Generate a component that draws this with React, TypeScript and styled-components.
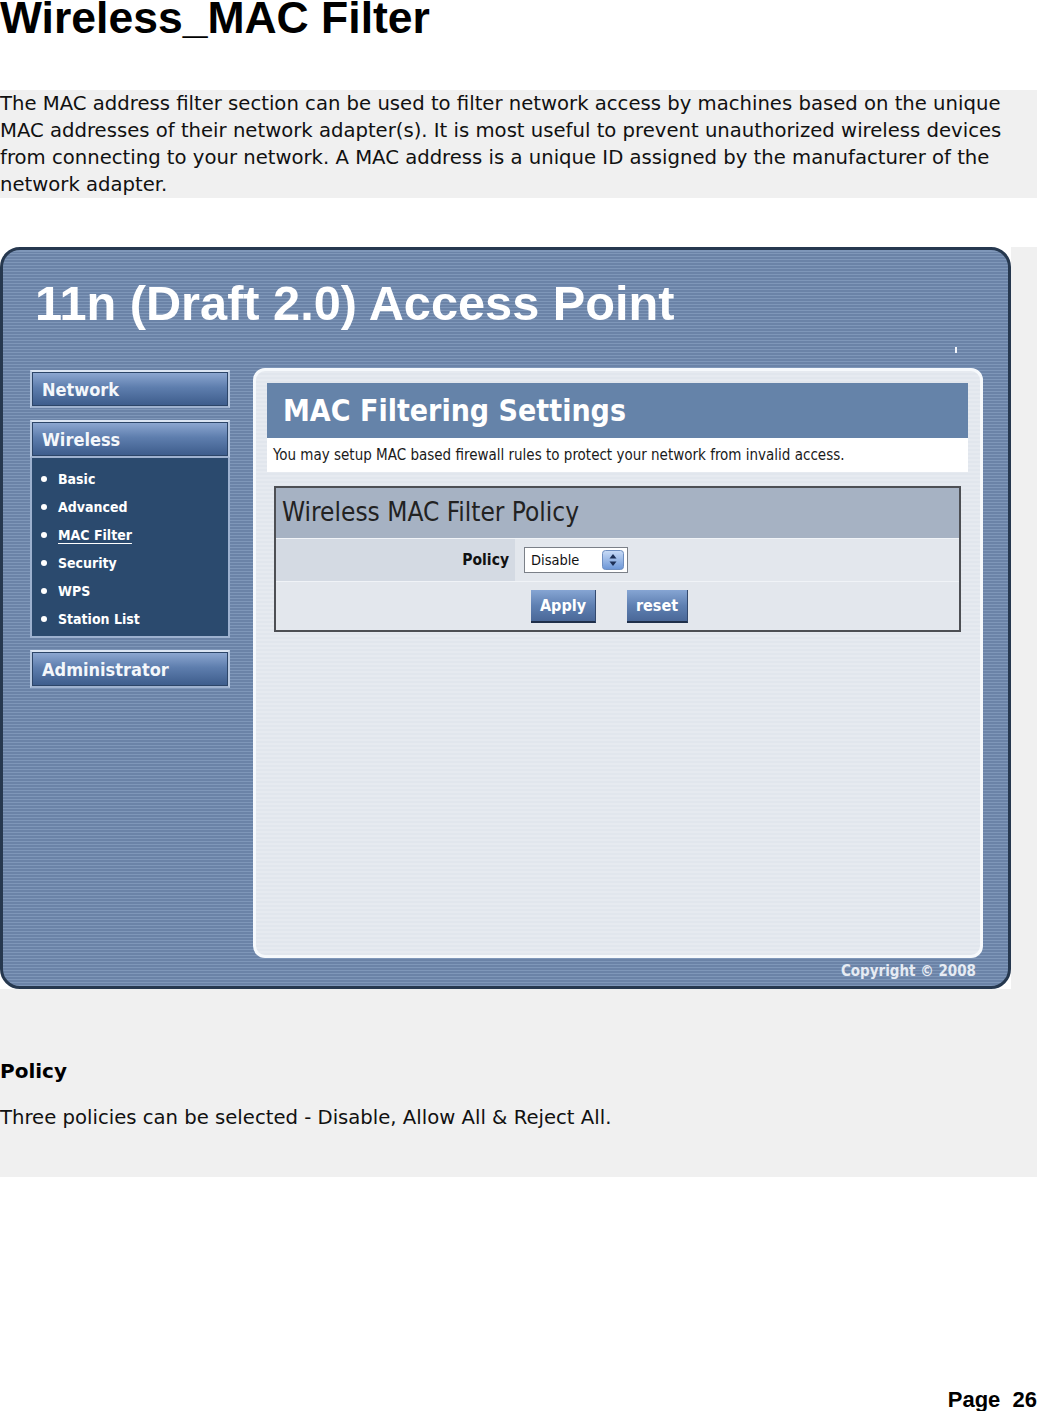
import React from "react";
import styled, { createGlobalStyle } from "styled-components";

const Global = createGlobalStyle`
  html, body { margin: 0; padding: 0; background: #ffffff; }
  body { font-family: "DejaVu Sans", sans-serif; color: #000; }
`;

const Page = styled.div`
  width: 1037px;
  display: flex;
  flex-direction: column;
`;

const Title = styled.h1`
  margin: 0;
  font-family: "Liberation Sans", Arial, sans-serif;
  font-weight: 700;
  font-size: 44.5px;
  line-height: 36px;
  height: 36px;
  color: #000;
`;

const Intro = styled.p`
  margin: 54px 0 0 0;
  background: #f0f0f0;
  font-family: "DejaVu Sans", sans-serif;
  font-size: 19.65px;
  line-height: 27px;
  color: #111;
`;

const Section = styled.section`
  margin-top: 49px;
  background: #f0f0f0;
  padding-bottom: 46px;
  display: flex;
  flex-direction: column;
`;

const Frame = styled.div`
  width: 1011px;
  height: 742px;
  background: #ffffff;
  display: flex;
`;

const Panel = styled.div`
  position: relative;
  flex: 1;
  border: 3px solid #26384f;
  border-radius: 20px;
  background: repeating-linear-gradient(
    to bottom,
    #7f97b9 0px,
    #7f97b9 1.5px,
    #6b83a7 1.5px,
    #6b83a7 3px
  );
  display: flex;
  flex-direction: column;
  overflow: hidden;
`;

const Banner = styled.div`
  height: 122px;
  padding-left: 32px;
  box-sizing: border-box;
  padding-top: 28px;
  font-family: "Liberation Sans", Arial, sans-serif;
  font-weight: 700;
  font-size: 48.7px;
  line-height: 50px;
  color: #ffffff;
`;

const Tick = styled.span`
  position: absolute;
  left: 952px;
  top: 97px;
  width: 2px;
  height: 6px;
  background: #f2f5fa;
`;

const Body = styled.div`
  display: flex;
  align-items: flex-start;
  padding-left: 27px;
  gap: 23px;
`;

const Sidebar = styled.nav`
  width: 200px;
  display: flex;
  flex-direction: column;
  padding-top: 2px;
`;

const NavButton = styled.div<{ $gapAfter?: boolean }>`
  height: 38px;
  box-sizing: border-box;
  border: 2px solid #b9c9e0;
  border-top-color: #dbe5f3;
  border-bottom-color: #9fb2cf;
  background: linear-gradient(to bottom, #8fa9d2 0%, #5e7eae 45%, #3c5b8a 100%);
  box-shadow: inset 0 0 0 1px #2c4568;
  display: flex;
  align-items: center;
  padding-left: 10px;
  font-family: "DejaVu Sans Condensed", "DejaVu Sans", sans-serif;
  font-weight: 700;
  font-size: 18px;
  color: #f4f7fb;
  margin-bottom: ${(p) => (p.$gapAfter ? "12px" : "0")};
`;

const SubMenu = styled.ul`
  margin: 0 0 12px 0;
  padding: 7px 0 3px 0;
  list-style: none;
  background: #2b4a6e;
  border: 2px solid #9db1cf;
  border-top: none;
  display: flex;
  flex-direction: column;
`;

const SubItem = styled.li<{ $active?: boolean }>`
  height: 28px;
  flex: none;
  display: flex;
  align-items: center;
  padding-left: 9px;
  font-family: "DejaVu Sans Condensed", "DejaVu Sans", sans-serif;
  font-weight: 700;
  font-size: 14px;
  color: #ffffff;
  text-decoration: ${(p) => (p.$active ? "underline" : "none")};
  text-underline-offset: 3px;

  &::before {
    content: "";
    width: 6px;
    height: 6px;
    border-radius: 50%;
    background: #ffffff;
    margin-right: 11px;
    flex: none;
  }
`;

const Main = styled.div`
  width: 730px;
  height: 590px;
  box-sizing: border-box;
  border: 3px solid #f6f9fc;
  border-radius: 12px;
  background: repeating-linear-gradient(
    to bottom,
    #e6eaf0 0px,
    #e6eaf0 2px,
    #e1e6ed 2px,
    #e1e6ed 4px
  );
  padding: 12px 12px 0 11px;
  display: flex;
  flex-direction: column;
`;

const Header = styled.div`
  height: 55px;
  background: #6583a9;
  display: flex;
  align-items: center;
  padding-left: 16px;
  font-family: "DejaVu Sans Condensed", "DejaVu Sans", sans-serif;
  font-weight: 700;
  font-size: 30px;
  color: #ffffff;
`;

const Desc = styled.div`
  height: 34px;
  background: #ffffff;
  display: flex;
  align-items: center;
  padding-left: 6px;
  font-family: "DejaVu Sans Condensed", "DejaVu Sans", sans-serif;
  font-size: 15px;
  color: #1a1a1a;
`;

const Table = styled.div`
  margin: 14px 7px 0 7px;
  border: 2px solid #4d4f54;
  display: flex;
  flex-direction: column;
`;

const TableHead = styled.div`
  height: 50px;
  background: #a6b2c3;
  display: flex;
  align-items: center;
  padding-left: 6px;
  padding-bottom: 3px;
  box-sizing: border-box;
  font-family: "DejaVu Sans Condensed", "DejaVu Sans", sans-serif;
  font-size: 26px;
  color: #222;
`;

const Row = styled.div`
  display: flex;
  height: 42px;
  border-top: 1px solid #f0f3f7;
`;

const LabelCell = styled.div`
  width: 239px;
  background: #d4dae3;
  display: flex;
  align-items: center;
  justify-content: flex-end;
  padding-right: 6px;
  box-sizing: border-box;
  font-family: "DejaVu Sans Condensed", "DejaVu Sans", sans-serif;
  font-weight: 700;
  font-size: 15.5px;
  color: #111;
`;

const ValueCell = styled.div`
  flex: 1;
  background: #e3e7ed;
  display: flex;
  align-items: center;
  padding-left: 9px;
`;

const Select = styled.div`
  width: 104px;
  height: 26px;
  box-sizing: border-box;
  border: 1px solid #7b8088;
  background: #ffffff;
  display: flex;
  align-items: center;
  justify-content: space-between;
  padding: 0 3px 0 6px;
  font-family: "DejaVu Sans Condensed", "DejaVu Sans", sans-serif;
  font-size: 14.5px;
  color: #111;
`;

const ButtonRow = styled.div`
  height: 48px;
  background: #e3e7ed;
  border-top: 1px solid #f0f3f7;
  display: flex;
  align-items: center;
  padding-left: 255px;
  gap: 31px;
`;

const Btn = styled.div<{ $w: number }>`
  width: ${(p) => p.$w}px;
  height: 33px;
  box-sizing: border-box;
  background: linear-gradient(to bottom, #86a5d3 0%, #5f80b2 50%, #4a6898 100%);
  border-bottom: 2px solid #1f2f4a;
  border-right: 1px solid #33496e;
  display: flex;
  align-items: center;
  justify-content: center;
  font-family: "DejaVu Sans Condensed", "DejaVu Sans", sans-serif;
  font-weight: 700;
  font-size: 16px;
  color: #ffffff;
`;

const Footer = styled.div`
  margin-top: auto;
  height: 26px;
  padding-top: 3px;
  display: flex;
  align-items: flex-start;
  justify-content: flex-end;
  padding-right: 32px;
  font-family: "DejaVu Sans Condensed", "DejaVu Sans", sans-serif;
  font-weight: 700;
  font-size: 15px;
  line-height: 20px;
  color: #e6ebf3;
`;

const Heading = styled.h3`
  margin: 69px 0 0 0;
  font-family: "DejaVu Sans", sans-serif;
  font-weight: 700;
  font-size: 20px;
  line-height: 27px;
`;

const Text = styled.p`
  margin: 19px 0 0 0;
  font-family: "DejaVu Sans", sans-serif;
  font-size: 19.65px;
  line-height: 27px;
  color: #111;
`;

const PageNo = styled.div`
  margin-top: 212px;
  text-align: right;
  white-space: pre;
  font-family: "Liberation Sans", Arial, sans-serif;
  font-weight: 700;
  font-size: 22px;
  line-height: 22px;
`;

const SpinIcon = () => (
  <svg width="22" height="20" viewBox="0 0 22 20">
    <defs>
      <linearGradient id="sg" x1="0" y1="0" x2="0" y2="1">
        <stop offset="0" stopColor="#c9dcf7" />
        <stop offset="1" stopColor="#6b95d6" />
      </linearGradient>
    </defs>
    <rect x="0.5" y="0.5" width="21" height="19" rx="3" fill="url(#sg)" stroke="#6f8fc0" />
    <path d="M11 4 L14.5 8.5 H7.5 Z" fill="#1d2f55" />
    <path d="M11 16 L14.5 11.5 H7.5 Z" fill="#1d2f55" />
  </svg>
);

export default function App() {
  const items = ["Basic", "Advanced", "MAC Filter", "Security", "WPS", "Station List"];
  return (
    <>
      <Global />
      <Page>
        <Title>Wireless_MAC Filter</Title>
        <Intro>
          The MAC address filter section can be used to filter network access by machines based on the unique
          <br />
          MAC addresses of their network adapter(s). It is most useful to prevent unauthorized wireless devices
          <br />
          from connecting to your network. A MAC address is a unique ID assigned by the manufacturer of the
          <br />
          network adapter.
        </Intro>
        <Section>
          <Frame>
            <Panel>
              <Banner>11n (Draft 2.0) Access Point</Banner>
              <Tick />
              <Body>
                <Sidebar>
                  <NavButton $gapAfter>Network</NavButton>
                  <NavButton>Wireless</NavButton>
                  <SubMenu>
                    {items.map((it) => (
                      <SubItem key={it} $active={it === "MAC Filter"}>
                        {it}
                      </SubItem>
                    ))}
                  </SubMenu>
                  <NavButton>Administrator</NavButton>
                </Sidebar>
                <Main>
                  <Header>MAC Filtering Settings</Header>
                  <Desc>You may setup MAC based firewall rules to protect your network from invalid access.</Desc>
                  <Table>
                    <TableHead>Wireless MAC Filter Policy</TableHead>
                    <Row>
                      <LabelCell>Policy</LabelCell>
                      <ValueCell>
                        <Select>
                          <span>Disable</span>
                          <SpinIcon />
                        </Select>
                      </ValueCell>
                    </Row>
                    <ButtonRow>
                      <Btn $w={65}>Apply</Btn>
                      <Btn $w={61}>reset</Btn>
                    </ButtonRow>
                  </Table>
                </Main>
              </Body>
              <Footer>Copyright © 2008</Footer>
            </Panel>
          </Frame>
          <Heading>Policy</Heading>
          <Text>Three policies can be selected - Disable, Allow All &amp; Reject All.</Text>
        </Section>
        <PageNo>{"Page  26"}</PageNo>
      </Page>
    </>
  );
}
